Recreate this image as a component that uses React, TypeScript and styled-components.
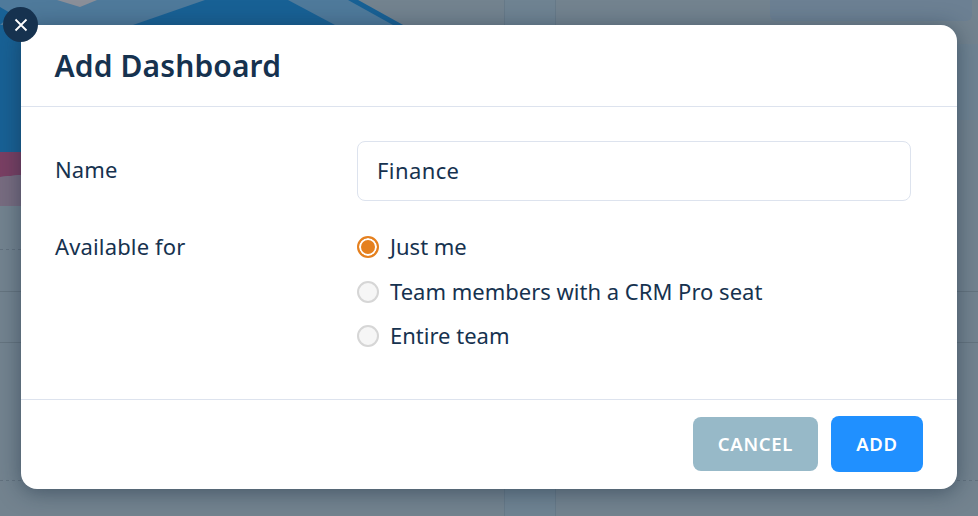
import { useState } from 'react';
import styled, { createGlobalStyle } from 'styled-components';

const options = ['Just me', 'Team members with a CRM Pro seat', 'Entire team'];

const GlobalStyle = createGlobalStyle`
  html, body {
    margin: 0;
    padding: 0;
    height: 100%;
    overflow: hidden;
  }
  body {
    font-family: "Noto Sans", "Open Sans", sans-serif;
    color: #16324f;
  }
`;

const Page = styled.div`
  position: relative;
  width: 978px;
  height: 516px;
  box-sizing: border-box;
  padding: 25px 21px 27px;
  background: #73838f;
  overflow: hidden;
`;

const Backdrop = styled.svg`
  position: absolute;
  inset: 0;
`;

const Dialog = styled.div`
  position: relative;
  display: flex;
  flex-direction: column;
  height: 100%;
  background: #fff;
  border-radius: 16px;
  box-shadow: 0 3px 22px rgba(20, 40, 60, 0.5);
`;

const CloseButton = styled.button`
  position: absolute;
  left: -18px;
  top: -18px;
  width: 35px;
  height: 35px;
  padding: 0;
  border: 0;
  border-radius: 50%;
  background: #16324f;
  color: #fff;
  display: flex;
  align-items: center;
  justify-content: center;
`;

const Header = styled.header`
  height: 82px;
  box-sizing: border-box;
  border-bottom: 1px solid #dde3ee;
  padding: 1px 34px 0 33.5px;
  display: flex;
  align-items: center;
`;

const Title = styled.h1`
  margin: 0;
  font-size: 30px;
  font-weight: 600;
  line-height: 1;
  letter-spacing: 0.12px;
`;

const Body = styled.div`
  flex: 1;
  padding: 34px 46px 0 34px;
  display: flex;
  flex-direction: column;
  gap: 23.75px;
`;

const Row = styled.div`
  display: grid;
  grid-template-columns: 302px 1fr;
`;

const Label = styled.div<{ $tall?: boolean }>`
  font-size: 22px;
  letter-spacing: 0.15px;
  line-height: ${({ $tall }) => ($tall ? '42px' : '56px')};
`;

const TextInput = styled.input`
  box-sizing: border-box;
  width: 100%;
  height: 60px;
  padding: 0 19px 2px;
  border: 1px solid #dde3ee;
  border-radius: 8px;
  background: #fff;
  color: #16324f;
  font: 400 22px "Noto Sans", sans-serif;
  letter-spacing: 0.4px;
  outline: none;
`;

const RadioList = styled.div`
  display: flex;
  flex-direction: column;
`;

const RadioRow = styled.label`
  height: 44.5px;
  display: flex;
  align-items: center;
  gap: 11px;
  font-size: 22px;
`;

const RadioText = styled.span`
  position: relative;
  top: -0.6px;
`;

const RadioMark = styled.span<{ $checked: boolean }>`
  box-sizing: border-box;
  width: 22px;
  height: 22px;
  border-radius: 50%;
  border: 2px solid ${({ $checked }) => ($checked ? '#e5801f' : '#d6d6d6')};
  background: ${({ $checked }) => ($checked ? '#e5801f' : '#f6f6f6')};
  box-shadow: ${({ $checked }) => ($checked ? 'inset 0 0 0 2px #fff' : 'none')};
`;

const Footer = styled.footer`
  height: 90px;
  box-sizing: border-box;
  border-top: 1px solid #dde3ee;
  padding: 0 34px 2px 0;
  display: flex;
  align-items: center;
  justify-content: flex-end;
  gap: 13px;
`;

const Button = styled.button<{ $primary?: boolean }>`
  box-sizing: border-box;
  width: ${({ $primary }) => ($primary ? '92px' : '125px')};
  height: ${({ $primary }) => ($primary ? '56px' : '54px')};
  border: 0;
  border-radius: 8px;
  background: ${({ $primary }) => ($primary ? '#2090ff' : '#97b9c8')};
  color: #fff;
  font: 600 18.5px "Noto Sans", sans-serif;
  letter-spacing: 0.7px;
  text-transform: uppercase;
`;

export default function App() {
  const [selected, setSelected] = useState(0);

  return (
    <Page>
      <GlobalStyle />
      <Backdrop width="978" height="516" viewBox="0 0 978 516">
        {/* the chart and panels behind the scrim */}
        <rect x="0" y="25" width="21" height="127" fill="#186195" />
        <path d="M0 0 H358 L403 25 H0 Z" fill="#4f7a9b" />
        <path d="M0 7 L12 14 L0 25 Z" fill="#186195" />
        <path d="M57 0 L80 7 L97 0 Z" fill="#8b8f99" />
        <path d="M133 25 L205 0 H288 L335 25 Z" fill="#186195" />
        <path d="M348 0 H358 L403 25 H393 Z" fill="#186195" />
        <path d="M0 152 H21 V175 L0 177 Z" fill="#7a3f63" />
        <path d="M0 177 L21 175 V206 H0 Z" fill="#786c80" />
        <path d="M0 249.5 H21 M0 480.5 H21" stroke="#62717e" strokeDasharray="3 3" />
        <path d="M0 291.5 H21 M0 342.5 H21" stroke="#65747f" />
        <rect x="504" y="0" width="51" height="25" fill="#6f8392" />
        <rect x="504" y="489" width="51" height="27" fill="#6f8392" />
        <path d="M504.5 0 V25 M555.5 0 V25 M504.5 489 V516 M555.5 489 V516" stroke="#677a89" />
        <rect x="770" y="-6" width="202" height="27" rx="6" fill="#6c8093" />
        <rect x="957" y="44" width="21" height="76" fill="#6f8392" />
        <path d="M957 291.5 H978 M957 342.5 H978" stroke="#65747f" />
        <path d="M957 480.5 H978" stroke="#62717e" strokeDasharray="3 3" />
      </Backdrop>
      <Dialog>
        <CloseButton aria-label="Close">
          <svg width="14" height="14" viewBox="0 0 14 14" fill="none">
            <path d="M1.5 1.5 L12.5 12.5 M12.5 1.5 L1.5 12.5" stroke="currentColor" strokeWidth="1.8" />
          </svg>
        </CloseButton>
        <Header>
          <Title>Add Dashboard</Title>
        </Header>
        <Body>
          <Row>
            <Label>Name</Label>
            <TextInput defaultValue="Finance" />
          </Row>
          <Row>
            <Label $tall>Available for</Label>
            <RadioList>
              {options.map((option, i) => (
                <RadioRow key={option} onClick={() => setSelected(i)}>
                  <RadioMark $checked={selected === i} />
                  <RadioText>{option}</RadioText>
                </RadioRow>
              ))}
            </RadioList>
          </Row>
        </Body>
        <Footer>
          <Button>Cancel</Button>
          <Button $primary>Add</Button>
        </Footer>
      </Dialog>
    </Page>
  );
}
